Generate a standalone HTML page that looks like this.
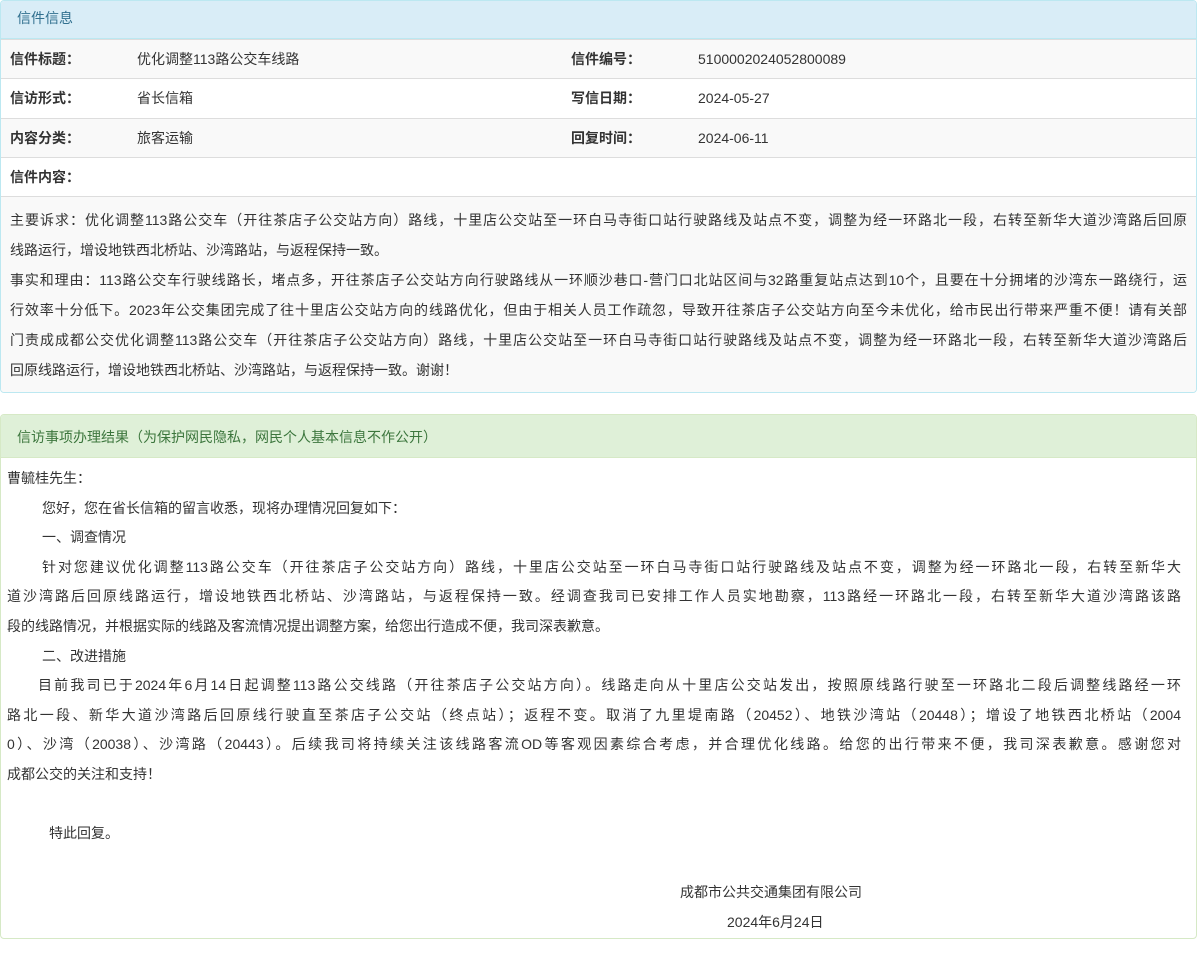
<!DOCTYPE html>
<html><head><meta charset="utf-8"><style>
*{margin:0;padding:0;box-sizing:border-box}
body{width:1200px;height:965px;background:#fff;font-family:"Liberation Sans","Noto Sans CJK SC",sans-serif;font-size:14px;color:#333;overflow:hidden;position:relative}
.p1{position:absolute;left:0;top:0;width:1197px;height:393px;border:1px solid #bce8f1;border-radius:4px;overflow:hidden}
.h1{height:38px;background:#d9edf7;color:#31708f;padding-left:16px;line-height:34px;font-size:14px;border-bottom:1px solid #bce8f1}
.row{position:absolute;left:0;width:100%;height:39px;border-top:1px solid #ddd;line-height:38px}
.row b{position:absolute;font-weight:bold;color:#333}
.row span{position:absolute}
.c{position:absolute;left:0;top:195px;width:100%;height:197px;background:#f9f9f9;border-top:1px solid #ddd;padding:8px 9px 0 9px}
.l{white-space:nowrap;text-align:justify;text-align-last:justify;height:30px;line-height:30px}
.ln{white-space:nowrap;height:30px;line-height:30px}
.p2{position:absolute;left:0;top:414px;width:1197px;height:525px;border:1px solid #d6e9c6;border-radius:4px;overflow:hidden}
.h2{height:43px;background:#dff0d8;color:#3c763d;padding-left:16px;line-height:44px;border-bottom:1px solid #d6e9c6}
.b2{padding:6px 15px 0 6px}
.b2 .l,.b2 .ln{height:29.6px;line-height:29.6px}
</style></head><body>
<div class="p1">
<div class="h1">信件信息</div>
<div class="row" style="top:38px;background:#f9f9f9"><b style="left:9px">信件标题：</b><span style="left:136px">优化调整113路公交车线路</span><b style="left:570px">信件编号：</b><span style="left:697px">5100002024052800089</span></div>
<div class="row" style="top:77px"><b style="left:9px">信访形式：</b><span style="left:136px">省长信箱</span><b style="left:570px">写信日期：</b><span style="left:697px">2024-05-27</span></div>
<div class="row" style="top:117px;background:#f9f9f9"><b style="left:9px">内容分类：</b><span style="left:136px">旅客运输</span><b style="left:570px">回复时间：</b><span style="left:697px">2024-06-11</span></div>
<div class="row" style="top:156px"><b style="left:9px">信件内容：</b></div>
<div class="c">
<div class="l">主要诉求：优化调整113路公交车（开往茶店子公交站方向）路线，十里店公交站至一环白马寺街口站行驶路线及站点不变，调整为经一环路北一段，右转至新华大道沙湾路后回原</div>
<div class="ln">线路运行，增设地铁西北桥站、沙湾路站，与返程保持一致。</div>
<div class="l">事实和理由：113路公交车行驶线路长，堵点多，开往茶店子公交站方向行驶路线从一环顺沙巷口-营门口北站区间与32路重复站点达到10个，且要在十分拥堵的沙湾东一路绕行，运</div>
<div class="l">行效率十分低下。2023年公交集团完成了往十里店公交站方向的线路优化，但由于相关人员工作疏忽，导致开往茶店子公交站方向至今未优化，给市民出行带来严重不便！请有关部</div>
<div class="l">门责成成都公交优化调整113路公交车（开往茶店子公交站方向）路线，十里店公交站至一环白马寺街口站行驶路线及站点不变，调整为经一环路北一段，右转至新华大道沙湾路后</div>
<div class="ln">回原线路运行，增设地铁西北桥站、沙湾路站，与返程保持一致。谢谢！</div>
</div>
</div>
<div class="p2">
<div class="h2">信访事项办理结果（为保护网民隐私，网民个人基本信息不作公开）</div>
<div class="b2">
<div class="ln">曹毓桂先生：</div>
<div class="ln" style="padding-left:35px">您好，您在省长信箱的留言收悉，现将办理情况回复如下：</div>
<div class="ln" style="padding-left:35px">一、调查情况</div>
<div class="l" style="padding-left:35px">针对您建议优化调整113路公交车（开往茶店子公交站方向）路线，十里店公交站至一环白马寺街口站行驶路线及站点不变，调整为经一环路北一段，右转至新华大</div>
<div class="l">道沙湾路后回原线路运行，增设地铁西北桥站、沙湾路站，与返程保持一致。经调查我司已安排工作人员实地勘察，113路经一环路北一段，右转至新华大道沙湾路该路</div>
<div class="ln">段的线路情况，并根据实际的线路及客流情况提出调整方案，给您出行造成不便，我司深表歉意。</div>
<div class="ln" style="padding-left:35px">二、改进措施</div>
<div class="l" style="padding-left:31px">目前我司已于2024年6月14日起调整113路公交线路（开往茶店子公交站方向）。线路走向从十里店公交站发出，按照原线路行驶至一环路北二段后调整线路经一环</div>
<div class="l">路北一段、新华大道沙湾路后回原线行驶直至茶店子公交站（终点站）；返程不变。取消了九里堤南路（20452）、地铁沙湾站（20448）；增设了地铁西北桥站（2004</div>
<div class="l">0）、沙湾（20038）、沙湾路（20443）。后续我司将持续关注该线路客流OD等客观因素综合考虑，并合理优化线路。给您的出行带来不便，我司深表歉意。感谢您对</div>
<div class="ln">成都公交的关注和支持！</div>
<div class="ln"></div>
<div class="ln" style="padding-left:42px">特此回复。</div>
<div class="ln"></div>
<div class="ln" style="padding-left:673px">成都市公共交通集团有限公司</div>
<div class="ln" style="padding-left:720px">2024年6月24日</div>
</div>
</div>
</body></html>
